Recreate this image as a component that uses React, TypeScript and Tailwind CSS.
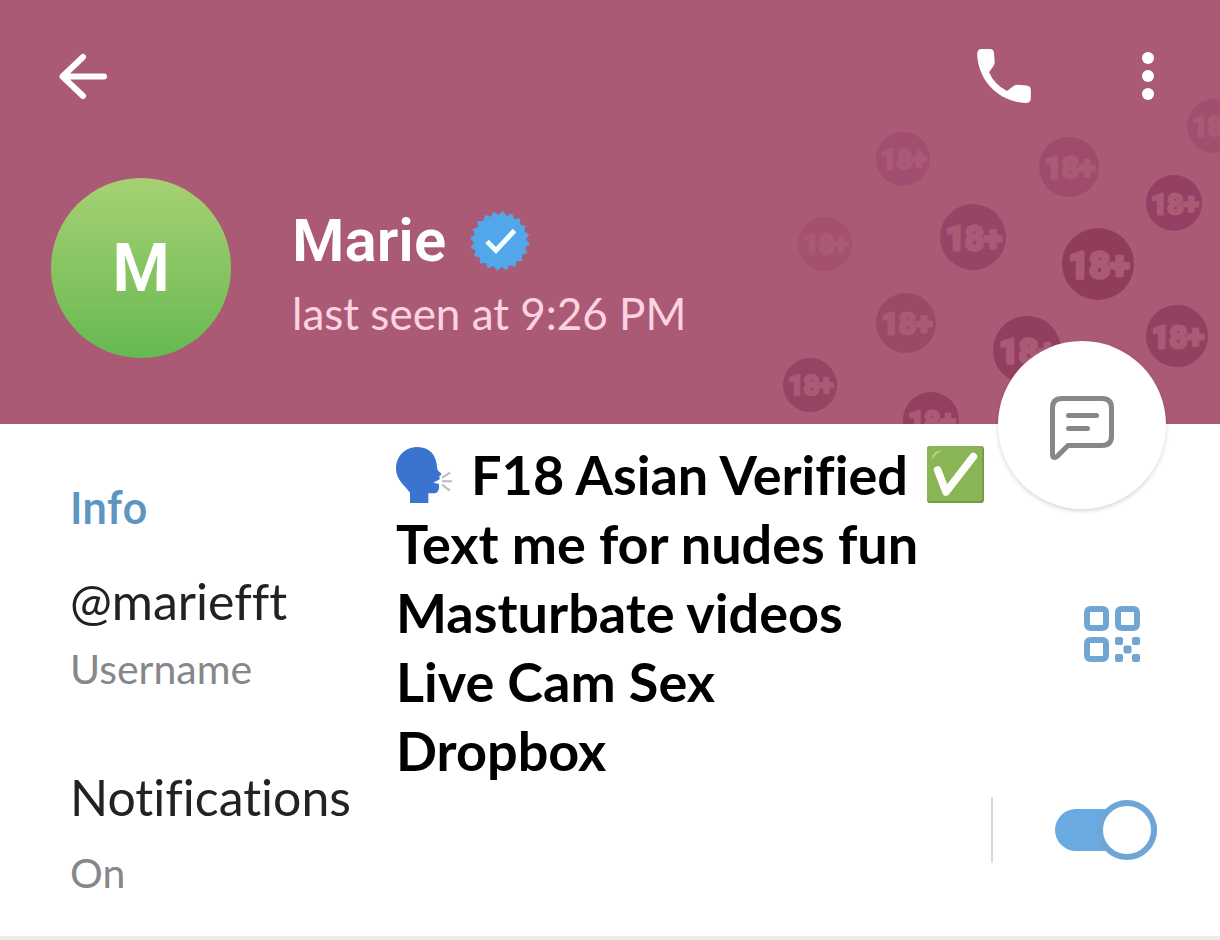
import React, { useState } from 'react';

interface StickerProps {
  x: number;
  y: number;
  r: number;
  fill: string;
}

const stickers: StickerProps[] = [
  { x: 133, y: 159, r: 27, fill: '#a34e70' },
  { x: 55, y: 244, r: 27, fill: '#a5506f' },
  { x: 203, y: 237, r: 33, fill: '#984466' },
  { x: 136, y: 323, r: 30, fill: '#9c4968' },
  { x: 40, y: 385, r: 27, fill: '#974464' },
  { x: 161, y: 420, r: 28, fill: '#943f60' },
  { x: 299, y: 167, r: 30, fill: '#a04b6c' },
  { x: 404, y: 203, r: 28, fill: '#954062' },
  { x: 328, y: 264, r: 36, fill: '#923c5c' },
  { x: 407, y: 336, r: 31, fill: '#944060' },
  { x: 257, y: 350, r: 34, fill: '#923e60' },
  { x: 444, y: 126, r: 27, fill: '#a24e6e' },
];

const bioLines = ['Text me for nudes fun', 'Masturbate videos', 'Live Cam Sex', 'Dropbox'];

// Zigzag outline of the verified badge
const badgePoints = Array.from({ length: 40 }, (_, i) => {
  const radius = i % 2 === 0 ? 30 : 26;
  const angle = (i * Math.PI) / 20 + 0.1;
  return `${(30 + radius * Math.cos(angle)).toFixed(1)},${(30 + radius * Math.sin(angle)).toFixed(1)}`;
}).join(' ');

const Sticker: React.FC<StickerProps> = ({ x, y, r, fill }) => (
  <g>
    <circle cx={x} cy={y} r={r} fill={fill} />
    <text
      x={x + 1}
      y={y + r * 0.38}
      textAnchor="middle"
      fontSize={r}
      fill="#ab5a76"
      stroke="#ab5a76"
      strokeWidth={r * 0.1}
      strokeLinejoin="round"
      className="font-['Liberation_Sans_Narrow','Roboto',sans-serif] font-bold"
    >
      18+
    </text>
  </g>
);

const VerifiedBadge = () => (
  <svg viewBox="0 0 60 60" className="size-[60px] shrink-0" role="img" aria-label="Verified">
    <polygon points={badgePoints} fill="#52a6ea" />
    <path d="M17 30.5L26 39.5L44.5 19.5" fill="none" stroke="#f2ffff" strokeWidth="5" />
  </svg>
);

const SpeakingHead = () => (
  <svg viewBox="0 0 168 168" className="size-14 shrink-0" role="img" aria-label="Speaking head">
    <path
      d="M65 0C100 0 122 25 123 60Q123 68 127 72L135 79Q138 84 130 87L131 97L112 107L129 111L129 118Q130 138 115 139L97 139V168H42V137C30 118 0 100 0 65C0 25 30 0 65 0Z"
      fill="#3a74cf"
    />
    <path d="M138 92L163 77M138 103H168M138 113L162 131" stroke="#b4bcc0" strokeWidth="6" fill="none" />
  </svg>
);

const CheckMark = () => (
  <svg viewBox="0 0 171 171" className="size-[57px] shrink-0" role="img" aria-label="Check mark">
    <rect width="171" height="171" rx="10" fill="#6f9b45" />
    <rect width="166" height="165" rx="9" fill="#89b556" />
    <path d="M14 44Q14 14 46 12Q24 22 14 44Z" fill="#b5d584" />
    <path d="M32 72L57 138L139 32" fill="none" stroke="#fcfffa" strokeWidth="23" strokeLinecap="round" strokeLinejoin="round" />
  </svg>
);

const App: React.FC = () => {
  const [notifications, setNotifications] = useState(true);

  return (
    <div className="min-h-screen w-full overflow-hidden bg-white font-['Lato',sans-serif] [font-variant-ligatures:none]">
      <header className="relative bg-[#ab5a76] pb-[66px]">
        <svg viewBox="0 0 450 424" className="absolute right-0 bottom-0 h-[424px] w-[450px]" aria-hidden="true">
          {stickers.map((s) => (
            <Sticker key={`${s.x}-${s.y}`} {...s} />
          ))}
        </svg>

        <nav className="relative flex h-[152px] items-center justify-between pr-[66px] pl-[59px]">
          <button type="button" aria-label="Back">
            <svg viewBox="0 0 48 47" className="h-[47px] w-12" fill="none" stroke="#fff" strokeWidth="6" strokeLinecap="round" strokeLinejoin="round">
              <path d="M24 4L3.500 23.500L24 43M4 23.500H45" />
            </svg>
          </button>
          <div className="flex items-center gap-[111px]">
            <button type="button" aria-label="Call">
              <svg viewBox="0 0 162 163" className="size-[54px]" fill="#fff">
                <path d="M14 0H38Q51 0 51 14L53 40Q53 46 49 51L36 70Q50 105 90 127L110 112Q115 108 122 108L148 110Q162 111 162 124V148Q162 163 146 163C65 160 3 95 0 16Q0 0 14 0Z" />
              </svg>
            </button>
            <button type="button" aria-label="More options">
              <svg viewBox="0 0 12 48" className="h-12 w-3" fill="#fff">
                <circle cx="6" cy="6" r="6" />
                <circle cx="6" cy="24" r="6" />
                <circle cx="6" cy="42" r="6" />
              </svg>
            </button>
          </div>
        </nav>

        <div className="relative flex items-center gap-[61px] pt-[26px] pl-[51px]">
          <div className="flex size-[180px] items-center justify-center rounded-full bg-linear-to-b from-[#a6d173] to-[#66b951] font-['Roboto',sans-serif] text-[66px] font-semibold text-white">
            M
          </div>
          <div className="pt-[18px]">
            <div className="flex items-center gap-6">
              <h1 className="font-['Roboto',sans-serif] text-[60px] leading-[72px] font-semibold text-white">Marie</h1>
              <VerifiedBadge />
            </div>
            <p className="text-[44px] leading-[72px] text-[#fdd3e0]">last seen at 9:26 PM</p>
          </div>
        </div>

        <button
          type="button"
          aria-label="Send message"
          className="absolute right-[54px] -bottom-[85px] flex size-[168px] items-center justify-center rounded-full bg-white pt-1.5 shadow-[0_2px_4px_rgba(0,0,0,0.16)]"
        >
          <svg viewBox="0 0 64 64" className="size-16" fill="none" stroke="#848888" strokeWidth="5" strokeLinecap="round" strokeLinejoin="round">
            <path d="M2.500 12Q2.500 2.500 12 2.500H52Q61.500 2.500 61.500 12V40Q61.500 49.500 52 49.500H18L7 60.500Q2.500 63.500 2.500 58Z" />
            <path d="M18.500 19.500H46.500M18.500 32.500H37.500" />
          </svg>
        </button>
      </header>

      <main className="flex border-b-[5px] border-[#ececec] pr-[63px] pb-[29px] pl-[70px]">
        <section className="w-[280px] shrink-0 pt-[55px] whitespace-nowrap">
          <h2 className="font-['Roboto',sans-serif] text-[44px] leading-[60px] font-medium text-[#5c95c2]">Info</h2>
          <p className="mt-7 text-[50px] leading-[68px] text-[#222]">@mariefft</p>
          <p className="text-[41px] leading-[68px] text-[#85878b]">Username</p>
          <p className="mt-[60px] text-[50px] leading-[68px] text-[#222]">Notifications</p>
          <p className="mt-2 text-[41px] leading-[68px] text-[#85878b]">{notifications ? 'On' : 'Off'}</p>
        </section>

        <section className="ml-[46px] pt-4 text-[54px] leading-[69px] font-bold whitespace-nowrap text-black">
          <p className="flex items-center gap-[19px]">
            <SpeakingHead />
            <span>F18 Asian Verified</span>
            <CheckMark />
          </p>
          {bioLines.map((line) => (
            <p key={line}>{line}</p>
          ))}
        </section>

        <section className="ml-auto flex flex-col items-end pt-[182px]">
          <button type="button" aria-label="Show QR code" className="mr-4">
            <svg viewBox="0 0 57 57" className="size-[57px]" fill="#70a6d1">
              <path
                fillRule="evenodd"
                d="M7 0H18Q25 0 25 7V18Q25 25 18 25H7Q0 25 0 18V7Q0 0 7 0ZM6 6V19H19V6ZM38 0H49Q56 0 56 7V18Q56 25 49 25H38Q31 25 31 18V7Q31 0 38 0ZM37 6V19H50V6ZM7 31H18Q25 31 25 38V49Q25 56 18 56H7Q0 56 0 49V38Q0 31 7 31ZM6 37V50H19V37Z"
              />
              <rect x="31" y="31" width="8" height="8" rx="2" />
              <rect x="48" y="31" width="8" height="8" rx="2" />
              <rect x="39.500" y="39.500" width="8" height="8" rx="2" />
              <rect x="31" y="48" width="8" height="8" rx="2" />
              <rect x="48" y="48" width="8" height="8" rx="2" />
            </svg>
          </button>
          <div className="mt-[134px] flex items-center gap-[62px]">
            <div className="h-[66px] w-0.5 bg-[#d9d9d9]" />
            <label className="relative flex h-[60px] w-[102px] cursor-pointer items-center">
              <input
                type="checkbox"
                role="switch"
                aria-label="Notifications"
                checked={notifications}
                onChange={(e) => setNotifications(e.target.checked)}
                className="peer absolute inset-0 size-full opacity-0"
              />
              <span className="h-[42px] w-full rounded-full bg-gray-300 peer-checked:bg-[#6aaae2]" />
              <span className="absolute left-0 size-[60px] rounded-full border-[6px] border-gray-300 bg-white peer-checked:right-0 peer-checked:left-auto peer-checked:border-[#70a6d6]" />
            </label>
          </div>
        </section>
      </main>
    </div>
  );
};

export default App;
